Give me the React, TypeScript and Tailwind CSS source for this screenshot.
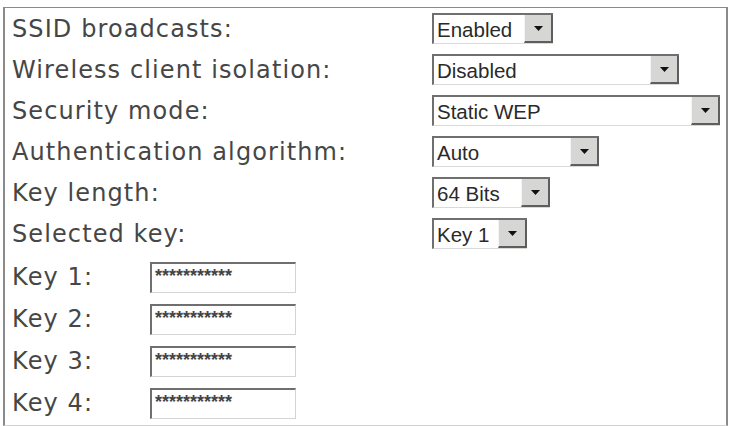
import React from 'react';

// --- classic sunken select box with a raised arrow button ---
const Dropdown: React.FC<{ value: string; width: string }> = ({ value, width }) => (
    <div className={`${width} h-[31px] flex bg-white border-t-2 border-l-2 border-[#6f6f6f] border-b border-b-[#d9d9d9]`}>
        <span className="flex-1 pl-[3px] leading-[29px] text-[20.5px] text-[#2a2a2a] whitespace-nowrap overflow-hidden font-['Liberation_Sans',Arial,sans-serif]">
            {value}
        </span>
        <div className="w-[29px] h-full flex items-center justify-center bg-[#d6d6d4] border-l border-l-[#f4f4f4] border-r-2 border-r-[#5e5e5e] border-b-2 border-b-[#5e5e5e] -mb-px">
            <svg width="9" height="5" viewBox="0 0 9 5">
                <path d="M0 0 L9 0 L4.5 5 Z" fill="#111" />
            </svg>
        </div>
    </div>
);

const KeyInput: React.FC = () => (
    <div className="w-[146px] h-[31px] bg-white border-t-2 border-l-2 border-[#6f6f6f] border-r border-b border-r-[#d4d4d4] border-b-[#d4d4d4]">
        <span className="block pl-[3px] pt-[3px] leading-[18px] text-[18px] font-bold text-[#444] font-['Liberation_Sans',Arial,sans-serif]">
            ***********
        </span>
    </div>
);

const Label: React.FC<{ children: React.ReactNode }> = ({ children }) => (
    <span className="text-[24px] tracking-[1.1px] text-[#464646] font-['DejaVu_Sans',Verdana,sans-serif] whitespace-nowrap">{children}</span>
);

const selectRows: { label: string; value: string; width: string }[] = [
    { label: 'SSID broadcasts:', value: 'Enabled', width: 'w-[121px]' },
    { label: 'Wireless client isolation:', value: 'Disabled', width: 'w-[247px]' },
    { label: 'Security mode:', value: 'Static WEP', width: 'w-[288px]' },
    { label: 'Authentication algorithm:', value: 'Auto', width: 'w-[167px]' },
    { label: 'Key length:', value: '64 Bits', width: 'w-[118px]' },
    { label: 'Selected key:', value: 'Key 1', width: 'w-[95px]' },
];

export default function App() {
    return (
        <div className="w-[729px] h-[426px] bg-white overflow-hidden pt-[7px] pl-[3px]">
            <div className="w-[725px] h-[419px] flex flex-col border-t border-l-2 border-r-2 border-[#8a8a8a] border-b border-b-[#d2d2d2]">
                {selectRows.map(row => (
                    <div key={row.label} className="h-[41px] flex items-center">
                        <div className="w-[427px] pl-[7px]">
                            <Label>{row.label}</Label>
                        </div>
                        <Dropdown value={row.value} width={row.width} />
                    </div>
                ))}
                <div className="mt-[2px]">
                    {[1, 2, 3, 4].map(n => (
                        <div key={n} className="h-[42px] flex items-center">
                            <div className="w-[145px] pl-[7px]">
                                <Label>Key {n}:</Label>
                            </div>
                            <KeyInput />
                        </div>
                    ))}
                </div>
            </div>
        </div>
    );
}
